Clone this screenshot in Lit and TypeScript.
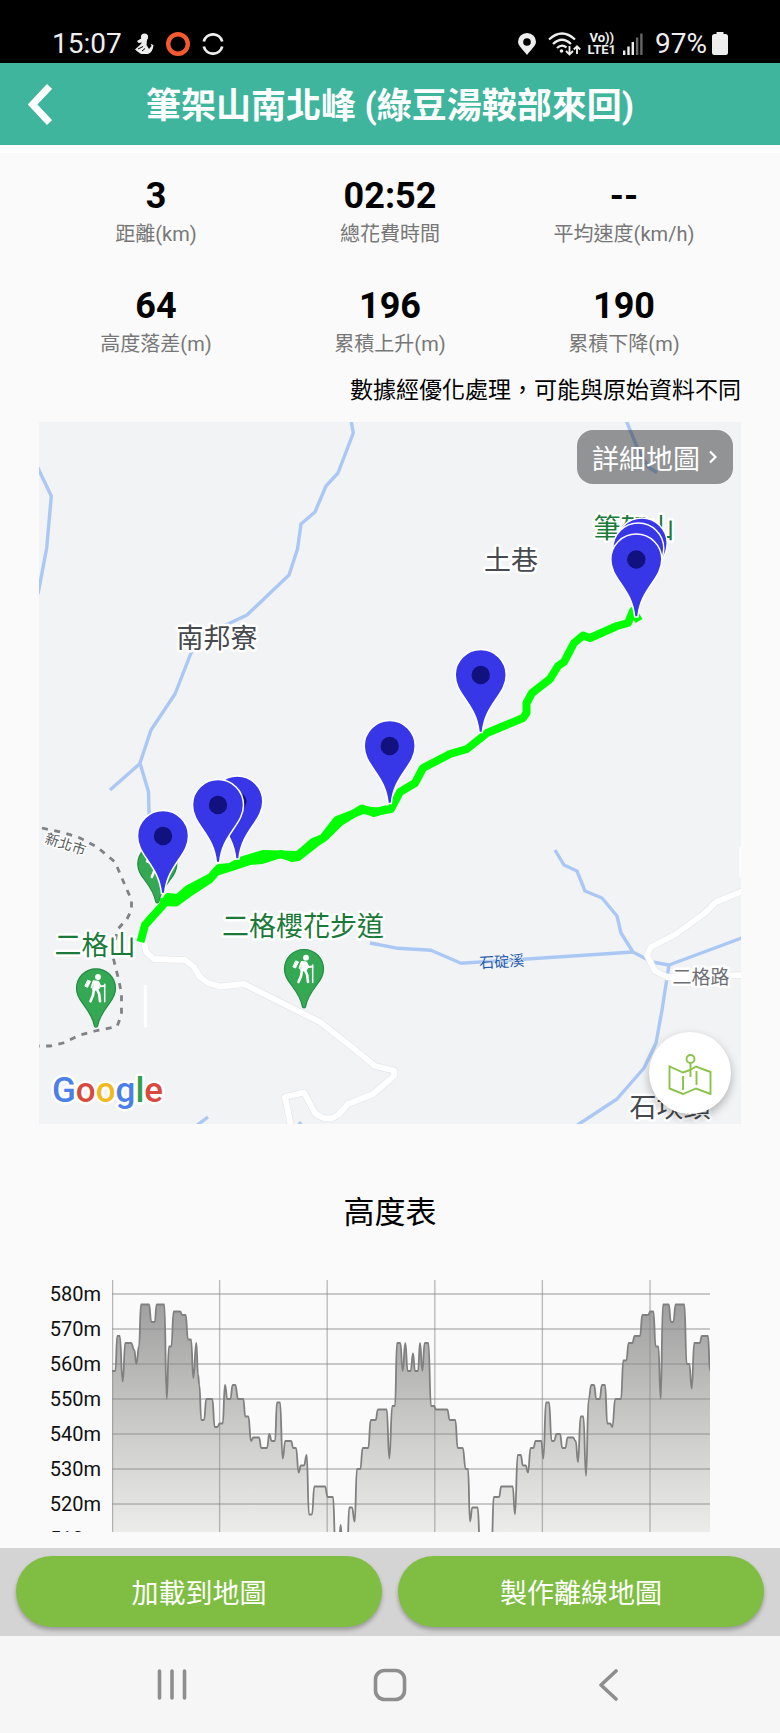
import { LitElement, html, css, svg } from "lit";
import { customElement } from "lit/decorators.js";

interface Stat {
  value: string;
  label: string;
}

const STATS: Stat[] = [
  { value: "3", label: "距離(km)" },
  { value: "02:52", label: "總花費時間" },
  { value: "--", label: "平均速度(km/h)" },
  { value: "64", label: "高度落差(m)" },
  { value: "196", label: "累積上升(m)" },
  { value: "190", label: "累積下降(m)" },
];

/* Pairs of track position and elevation in metres. */
const PROFILE: [number, number][] = [
  [0, 558], [10, 558], [16, 568], [23, 568], [32, 555], [40, 566], [57, 566], [67, 564], [73, 560], [81, 565],
  [87, 577], [111, 577], [118, 572], [128, 572], [134, 577], [157, 577], [164, 550], [171, 565], [178, 565],
  [185, 575], [204, 575], [211, 574], [221, 574], [228, 567], [237, 567], [244, 556], [253, 566], [258, 557],
  [262, 554], [268, 544], [276, 544], [283, 550], [301, 550], [308, 542], [316, 542], [323, 543], [332, 543],
  [339, 554], [346, 550], [355, 550], [362, 554], [370, 554], [378, 550], [394, 550], [400, 545], [409, 545],
  [417, 538], [424, 539], [441, 539], [448, 536], [465, 536], [472, 540], [479, 538], [489, 538], [495, 549],
  [504, 549], [512, 533], [520, 538], [537, 538], [544, 536], [552, 536], [560, 529], [567, 531], [576, 531],
  [584, 534], [591, 517], [600, 517], [607, 525], [639, 525], [647, 522], [663, 522], [670, 508], [680, 508],
  [686, 514], [691, 508], [706, 508], [712, 519], [720, 519], [728, 515], [735, 530], [745, 530], [752, 536],
  [769, 536], [776, 544], [791, 544], [798, 547], [824, 547], [832, 533], [841, 548], [849, 548], [855, 566],
  [865, 566], [872, 558], [880, 566], [887, 558], [896, 558], [903, 563], [909, 558], [918, 558], [924, 566],
  [931, 558], [938, 566], [949, 566], [957, 548], [966, 548], [972, 547], [1006, 547], [1013, 544], [1030, 544],
  [1037, 536], [1052, 536], [1061, 530], [1068, 530], [1074, 515], [1081, 519], [1097, 519], [1104, 508],
  [1139, 508], [1145, 522], [1161, 522], [1168, 525], [1202, 525], [1209, 517], [1217, 534], [1226, 534],
  [1233, 531], [1241, 531], [1248, 529], [1256, 536], [1264, 536], [1271, 538], [1288, 538], [1294, 533],
  [1302, 549], [1311, 549], [1319, 538], [1326, 538], [1334, 540], [1344, 540], [1351, 536], [1360, 536],
  [1367, 539], [1383, 539], [1391, 538], [1398, 532], [1406, 545], [1414, 545], [1422, 528], [1430, 550],
  [1438, 554], [1446, 554], [1453, 550], [1463, 550], [1470, 554], [1479, 554], [1486, 543], [1494, 543],
  [1501, 542], [1510, 550], [1527, 550], [1534, 561], [1543, 561], [1550, 566], [1561, 566], [1568, 568],
  [1584, 568], [1591, 574], [1608, 574], [1615, 575], [1624, 575], [1631, 565], [1639, 565], [1646, 550],
  [1653, 577], [1670, 577], [1677, 572], [1684, 572], [1691, 577], [1717, 577], [1724, 560], [1732, 560],
  [1739, 553], [1747, 566], [1763, 566], [1770, 568], [1788, 568], [1794, 558],
];

const PLOT_W = 598;
const PLOT_H = 252;
const TOP_GRID = 14;
const PX_PER_METRE = 3.5;
const ELEVATIONS = [580, 570, 560, 550, 540, 530, 520, 510];

function profilePath(): string {
  const last = PROFILE[PROFILE.length - 1][0];
  const pts = PROFILE.map(([d, m]) => [(d / last) * PLOT_W, TOP_GRID + (580 - m) * PX_PER_METRE]);
  let d = `M${pts[0][0].toFixed(1)} ${pts[0][1].toFixed(1)}`;
  for (let i = 1; i < pts.length; i++) {
    const [x0, y0] = pts[i - 1];
    const [x1, y1] = pts[i];
    const mid = ((x0 + x1) / 2).toFixed(1);
    d += `C${mid} ${y0.toFixed(1)} ${mid} ${y1.toFixed(1)} ${x1.toFixed(1)} ${y1.toFixed(1)}`;
  }
  return d;
}

@customElement("elevation-chart")
class ElevationChart extends LitElement {
  static styles = css`
    :host {
      display: flex;
      gap: 11px;
      height: 252px;
      overflow: hidden;
    }
    .axis {
      flex: 0 0 62px;
      margin: -3px 0 0;
      padding: 0;
      list-style: none;
      text-align: right;
      font-size: 20px;
      line-height: 35px;
      color: #111;
    }
    .plot {
      flex: 1;
      min-width: 0;
      height: 252px;
      display: block;
    }
    .grid {
      stroke: #8a8a8a;
      stroke-opacity: 0.6;
      stroke-width: 1.3;
    }
    .line {
      fill: none;
      stroke: #808080;
      stroke-width: 1.8;
    }
    .grid,
    .line {
      vector-effect: non-scaling-stroke;
    }
  `;

  render() {
    const path = profilePath();
    return html`
      <ul class="axis">
        ${ELEVATIONS.map((m) => html`<li>${m}m</li>`)}
      </ul>
      <svg class="plot" viewBox="0 0 ${PLOT_W} ${PLOT_H}" preserveAspectRatio="none" role="img" aria-label="高度表">
        <defs>
          <linearGradient id="fade" gradientUnits="userSpaceOnUse" x1="0" y1="24" x2="0" y2="252">
            <stop offset="0" stop-color="#a0a0a0" />
            <stop offset="0.45" stop-color="#c4c4c3" />
            <stop offset="1" stop-color="#ececeb" />
          </linearGradient>
        </defs>
        <path fill="url(#fade)" d="${path}V260H0Z" />
        ${ELEVATIONS.map((m) => {
          const y = TOP_GRID + (580 - m) * PX_PER_METRE;
          return svg`<line class="grid" x1="0" x2=${PLOT_W} y1=${y} y2=${y} />`;
        })}
        ${[0, 1, 2, 3, 4, 5].map((i) => {
          const x = i === 0 ? 0.6 : i * 107.6;
          return svg`<line class="grid" x1=${x} x2=${x} y1="0" y2=${PLOT_H} />`;
        })}
        <path class="line" d=${path} />
      </svg>
    `;
  }
}

const waypoint = (x: number, y: number) => svg`
  <g transform="translate(${x} ${y})">
    <path class="pin" d="M-1.6 0C-3 -15 -9 -24 -15.500 -33.500C-20.500 -41 -25.500 -48 -25.500 -57.500A25.500 25.500 0 0 1 25.500 -57.500C25.500 -48 20.500 -41 15.500 -33.500C9 -24 3 -15 1.600 0Z" />
    <circle cy="-57.500" r="9.200" fill="#11117f" />
  </g>`;

const trailhead = (x: number, y: number) => svg`
  <g transform="translate(${x} ${y})">
    <path fill="#34a853" stroke="#228b44" stroke-width="1.200" d="M-1.500 38C-3 29 -8 22 -13 15.500C-17 10.500 -19.500 6 -19.500 0A19.500 19.500 0 0 1 19.500 0C19.500 6 17 10.500 13 15.500C8 22 3 29 1.500 38Q0 39.500 -1.500 38Z" />
    <g fill="#fff" stroke="#fff" stroke-linecap="round" stroke-linejoin="round">
      <circle cx="2" cy="-11.300" r="2.900" stroke="none" />
      <path stroke-width="1" d="M-8 -8L-5.500 -7L-8.500 -1L-10.800 -2Z" />
      <path stroke-width="1" d="M-2 -7.500L2.500 -7L3.500 0L0.500 2L-3 1.500Z" />
      <path fill="none" stroke-width="2.600" d="M-2 1L-3 7L-5.500 13M1 1L3.200 6L4 13" />
      <path fill="none" stroke-width="1.800" d="M2.500 -6L4.500 -2L8.500 -2.500M-2.500 -7L-4.500 -1" />
      <path fill="none" stroke-width="1.500" d="M8.700 -4V13.500" />
    </g>
  </g>`;

@customElement("route-map")
class RouteMap extends LitElement {
  static styles = css`
    :host {
      display: block;
      position: relative;
      aspect-ratio: 1;
      overflow: hidden;
      background: #f1f3f4;
    }
    .canvas {
      display: block;
      width: 100%;
      height: 100%;
    }
    .river {
      fill: none;
      stroke: #abc8f5;
      stroke-width: 3.4;
      stroke-linejoin: round;
    }
    .casing {
      fill: none;
      stroke: #e3e5e8;
      stroke-width: 7;
      stroke-linejoin: round;
    }
    .road {
      fill: none;
      stroke: #fff;
      stroke-width: 5.8;
      stroke-linejoin: round;
    }
    .path {
      fill: none;
      stroke: #fff;
      stroke-width: 3;
      stroke-linecap: round;
    }
    .border {
      fill: none;
      stroke: #7f8286;
      stroke-width: 2.8;
      stroke-dasharray: 6 6.5;
    }
    .track {
      fill: none;
      stroke: #0f0;
      stroke-width: 8;
      stroke-linejoin: round;
    }
    .pin {
      fill: #3737e8;
      stroke: #fff;
      stroke-width: 1.5;
    }
    text {
      text-anchor: middle;
      font-size: 27px;
      paint-order: stroke;
      stroke: #fff;
      stroke-width: 5px;
      stroke-linejoin: round;
    }
    .place {
      fill: #46494e;
    }
    .park {
      fill: #1b7a3a;
    }
    .county {
      fill: #55585c;
      font-size: 14px;
      stroke-width: 3px;
    }
    .water {
      fill: #1c58ad;
      font-size: 15px;
      stroke: #f1f3f4;
      stroke-width: 1px;
    }
    .street {
      fill: #6b6e73;
      font-size: 19px;
    }
    .google {
      text-anchor: start;
      font-size: 35px;
      font-weight: 500;
    }
    .blue { fill: #4a80e8; }
    .red { fill: #d84a3d; }
    .yellow { fill: #f2b91d; }
    .green { fill: #34a04f; }
    button {
      position: absolute;
      display: flex;
      align-items: center;
      border: 0;
      margin: 0;
      font: inherit;
      cursor: pointer;
    }
    .detail {
      top: 8px;
      right: 8px;
      height: 54px;
      padding: 0 15px;
      gap: 8px;
      border-radius: 16px;
      background: rgba(32, 32, 32, 0.45);
      color: #fff;
      font-size: 27px;
    }
    .locate {
      right: 10px;
      bottom: 10px;
      width: 82px;
      height: 82px;
      padding: 0;
      justify-content: center;
      border-radius: 50%;
      background: #fff;
      box-shadow: 0 4px 10px rgba(0, 0, 0, 0.28);
    }
  `;

  render() {
    const road1 =
      "M144 941L146 952L154 959L185 960L194 967L200 977L208 983L220 986.500L244 984L280 1002L320 1022L348 1044L375 1066L394 1070.500V1076L373 1094L348 1104L338 1115Q327 1123 315 1113L304 1092.500L285 1097L291 1126";
    const road2 = "M743 891L716 902L705 913L676 934L651 947L647 955L655 971L667 977H680L743 975";
    return html`
      <svg class="canvas" viewBox="39 422 702 702" preserveAspectRatio="xMidYMid slice" role="img" aria-label="路線地圖">
        <g class="river">
          <path d="M37 466L51.300 496L46.700 548L38 594" />
          <path d="M351 420L353.300 433L338 473L326 486L315 512L301 524L297.500 549L289 575L247 615L228 624L204 632L191 653L175 694L151 730L140 763L148.500 792L149.500 830" />
          <path d="M110 790L140 763.500" />
          <path d="M626 420L637 447L648 467L657 472.500" />
          <path d="M370 943L398 948.300L431 950.300L461 963.300L633 952" />
          <path d="M555 850L564 865L577 871L585 891L602 898L617 916L621 933L633 952L652 962L669 965L743 937.500" />
          <path d="M669 965L662 1010L656 1043L644 1068L617 1099L576 1126" />
          <path d="M208 1117L196 1126M301 1122L298 1126" />
        </g>
        <path class="casing" d=${road1} />
        <path class="casing" d=${road2} />
        <path class="road" d=${road1} />
        <path class="road" d=${road2} />
        <path class="path" d="M145.300 986V1026M741 848V876" />
        <path
          class="border"
          d="M42 828L63 832.500L80 838L97 847L115 862L124 883L131.500 900V910L127 919L117 930L113 957L118 977L121.500 993V1015L117 1026.500L95 1031L80 1035L63 1043L50 1046H38"
        />
        <text class="park" x="634" y="538">筆架山</text>
        ${trailhead(157.3, 864)} ${trailhead(96, 988.3)} ${trailhead(304, 969)} ${trailhead(636, 567)}
        <path
          class="track"
          d="M140.500 942L145 925L163 905L168 897L178 898L188 889L211 877L219 868L230 867L243 860L263 854L298 855L313 842L323 838L337 820L363 810L377 811.500L391 809L400 792L415 783L423 768L450 754L467 749L487 733L523 718L526.500 713V703L532 693L550 679L558 666L564 662L574 643L583 635.500L590 638L617 626L628 623L633 611L639 621"
        />
        <path
          class="track"
          d="M160 902L176 902.500L189 893L209 880L216 872L232 867L250 861L262 860L281 854L292 858L298 857L316 843L325 837L340 822L362 808.500L374 813L387 809"
        />
        <text class="place" x="217" y="648">南邦寮</text>
        <text class="place" x="511" y="570">土巷</text>
        <text class="place" x="670" y="1117">石坎頭</text>
        <text class="park" x="95" y="955">二格山</text>
        <text class="park" x="303" y="936">二格櫻花步道</text>
        <text class="county" transform="translate(64 849) rotate(18)">新北市</text>
        <text class="water" transform="translate(502 967) rotate(-3)">石碇溪</text>
        <text class="street" x="701" y="984">二格路</text>
        ${waypoint(641.7, 601)} ${waypoint(638.3, 606)} ${waypoint(636.3, 617)} ${waypoint(480.7, 732.5)}
        ${waypoint(389.7, 803.5)} ${waypoint(237.3, 859)} ${waypoint(218, 862.5)} ${waypoint(163, 893.5)}
        <text class="google" x="52" y="1102">
          <tspan class="blue">G</tspan><tspan class="red">o</tspan><tspan class="yellow">o</tspan
          ><tspan class="blue">g</tspan><tspan class="green">l</tspan><tspan class="red">e</tspan>
        </text>
      </svg>
      <button class="detail" type="button">
        詳細地圖
        <svg width="10" height="14" viewBox="0 0 10 14" fill="none" stroke="#fff" stroke-width="2.200" aria-hidden="true">
          <path d="M2 1.500L7.500 7L2 12.500" />
        </svg>
      </button>
      <button class="locate" type="button" aria-label="地圖圖層">
        <svg width="44" height="44" viewBox="0 0 44 44" fill="none" stroke="#8bc34a" stroke-width="1.900" aria-hidden="true">
          <path d="M22 19L15 21.500L1.500 15.500V37.500L15 43L28 37.500L42.500 43V21L28 15.500L22 19" />
          <path d="M15 25V39M28.500 20V34M22.500 12V26" />
          <circle cx="22.500" cy="8" r="4" />
        </svg>
      </button>
    `;
  }
}

@customElement("app-root")
class AppRoot extends LitElement {
  static styles = css`
    :host {
      display: block;
      background: #fafafa;
      color: #000;
      font-family: Roboto, "Noto Sans CJK TC", sans-serif;
    }
    button {
      border: 0;
      margin: 0;
      padding: 0;
      background: none;
      font: inherit;
      cursor: pointer;
    }
    svg {
      display: block;
    }
    .status {
      display: flex;
      justify-content: space-between;
      height: 39px;
      padding: 24px 52px 0;
      background: #000;
      color: #eee;
      font-size: 28px;
      line-height: 39px;
    }
    .cluster {
      display: flex;
      align-items: center;
      gap: 12px;
    }
    .reception {
      display: flex;
      align-items: center;
      gap: 7px;
    }
    .battery {
      display: flex;
      align-items: center;
      gap: 5px;
    }
    .volte {
      font-size: 13px;
      line-height: 12px;
      font-weight: 700;
      text-align: center;
    }
    .header {
      display: grid;
      grid-template-columns: 80px 1fr 80px;
      align-items: center;
      height: 82px;
      background: #3fb59d;
      border-bottom: 8px solid #fff;
      color: #fff;
    }
    .back {
      width: 80px;
      height: 82px;
      display: grid;
      place-items: center;
    }
    .title {
      margin: 0;
      padding-top: 6px;
      text-align: center;
      font-size: 35px;
      line-height: 48px;
      font-weight: 700;
      white-space: nowrap;
    }
    .content {
      padding: 21px 39px 0;
    }
    .stats {
      display: grid;
      grid-template-columns: repeat(3, 1fr);
      row-gap: 35px;
      margin: 0;
      text-align: center;
    }
    .stat {
      display: flex;
      flex-direction: column-reverse;
      gap: 1px;
    }
    .value {
      margin: 0;
      font-size: 36px;
      line-height: 44px;
      font-weight: 700;
    }
    .label {
      font-size: 20px;
      line-height: 30px;
      color: #777;
    }
    .note {
      margin: 16px 0 15px;
      text-align: right;
      font-size: 23px;
      line-height: 32px;
    }
    .section-title {
      margin: 67px 0 45px;
      text-align: center;
      font-size: 31px;
      line-height: 44px;
      font-weight: 400;
    }
    .chart {
      margin: 0 31px 16px 0;
    }
    .actions {
      display: grid;
      grid-template-columns: 1fr 1fr;
      gap: 16px;
      padding: 8px 16px 9px;
      background: #d4d4d4;
    }
    .action {
      height: 71px;
      border-radius: 36px;
      background: #80be43;
      box-shadow: 0 3px 4px rgba(0, 0, 0, 0.28);
      color: #fff;
      font-size: 27px;
    }
    .nav {
      display: grid;
      grid-template-columns: repeat(3, 1fr);
      height: 97px;
      padding: 0 63px;
      background: #f6f6f6;
    }
    .nav-button {
      display: grid;
      place-items: center;
    }
  `;

  render() {
    return html`
      <div class="status">
        <div class="cluster">
          <span>15:07</span>
          <svg width="20" height="22" viewBox="0 0 20 22" fill="#eee" aria-hidden="true">
            <circle cx="10.500" cy="4" r="3.600" />
            <path d="M3 8L8 5L13 7L12.500 12L15 16L17.500 13L16.800 11L19.500 12Q19 19 14 21H7L4 19L1 16.500L6 12L8 9.500L4.500 10Z" />
            <path d="M4 16L9 13.500M8 18L11 15.500" stroke="#000" stroke-width="1" />
          </svg>
          <svg width="24" height="24" viewBox="0 0 24 24" aria-hidden="true">
            <circle cx="12" cy="12" r="9.800" fill="none" stroke="#f4592f" stroke-width="4.400" />
          </svg>
          <svg width="22" height="22" viewBox="0 0 22 22" fill="none" stroke="#eee" stroke-width="2.800" aria-hidden="true">
            <path d="M1.800 8.500A9.500 9.500 0 0 1 20.200 8.500M1.800 13.500A9.500 9.500 0 0 0 20.200 13.500" />
          </svg>
        </div>
        <div class="cluster">
          <svg width="18" height="22" viewBox="0 0 18 22" fill="#eee" aria-hidden="true">
            <path fill-rule="evenodd" d="M9 22C5 16.500 0 13 0 8.800A9 8.800 0 0 1 18 8.800C18 13 13 16.500 9 22ZM9 5.200A3.800 3.800 0 1 0 9 12.800A3.800 3.800 0 1 0 9 5.200Z" />
          </svg>
          <div class="reception">
            <svg width="33" height="24" viewBox="0 0 33 24" fill="none" stroke="#eee" stroke-width="2.300" aria-hidden="true">
              <path d="M1 7.500Q14 -4.500 27 7.500M5 12Q14 3.500 23 12M9 16Q14 11.500 18.500 15.500" />
              <circle cx="13.500" cy="19" r="1.800" fill="#eee" stroke="none" />
              <path stroke-width="1.900" d="M21.500 14V22.500M18 19L21.500 22.500L25 19M29 22V14.500M25.800 17.500L29 14.300L32.200 17.500" />
            </svg>
            <div class="volte">Vo))<br />LTE1</div>
            <svg width="20" height="22" viewBox="0 0 20 22" fill="#eee" aria-hidden="true">
              <path d="M0 17.500H2.400V22H0ZM4.300 13.500H6.700V22H4.300ZM8.600 9H11V22H8.600Z" />
              <path fill="#666" d="M12.900 4.500H15.300V22H12.900ZM17.200 0.500H19.600V22H17.200Z" />
            </svg>
          </div>
          <div class="battery">
            <span>97%</span>
            <svg width="16" height="23" viewBox="0 0 16 23" fill="#eee" aria-hidden="true">
              <path d="M4.500 0H11.500V2H13.500Q16 2 16 4.500V20.500Q16 23 13.500 23H2.500Q0 23 0 20.500V4.500Q0 2 2.500 2H4.500Z" />
            </svg>
          </div>
        </div>
      </div>

      <header class="header">
        <button class="back" type="button" aria-label="返回">
          <svg width="24" height="41" viewBox="0 0 24 41" fill="none" stroke="#fff" stroke-width="7" aria-hidden="true">
            <path d="M21.500 2.500L4.500 20.500L21.500 38.500" />
          </svg>
        </button>
        <h1 class="title">筆架山南北峰 (綠豆湯鞍部來回)</h1>
      </header>

      <main class="content">
        <dl class="stats">
          ${STATS.map(
            (s) => html`<div class="stat">
              <dt class="label">${s.label}</dt>
              <dd class="value">${s.value}</dd>
            </div>`
          )}
        </dl>
        <p class="note">數據經優化處理，可能與原始資料不同</p>
        <route-map></route-map>
        <h2 class="section-title">高度表</h2>
        <elevation-chart class="chart"></elevation-chart>
      </main>

      <div class="actions">
        <button class="action" type="button">加載到地圖</button>
        <button class="action" type="button">製作離線地圖</button>
      </div>

      <nav class="nav">
        <button class="nav-button" type="button" aria-label="最近使用">
          <svg width="30" height="31" viewBox="0 0 30 31" stroke="#8e8e8e" stroke-width="3.600" stroke-linecap="round" aria-hidden="true">
            <path d="M2.500 2V29M15 2V29M27.500 2V29" />
          </svg>
        </button>
        <button class="nav-button" type="button" aria-label="主畫面">
          <svg width="34" height="34" viewBox="0 0 34 34" fill="none" stroke="#8e8e8e" stroke-width="3.600" aria-hidden="true">
            <rect x="2.500" y="2.500" width="29" height="29" rx="9" />
          </svg>
        </button>
        <button class="nav-button" type="button" aria-label="上一頁">
          <svg width="20" height="32" viewBox="0 0 20 32" fill="none" stroke="#8e8e8e" stroke-width="3.600" stroke-linecap="round" stroke-linejoin="round" aria-hidden="true">
            <path d="M18 2L3 16L18 30" />
          </svg>
        </button>
      </nav>
    `;
  }
}
